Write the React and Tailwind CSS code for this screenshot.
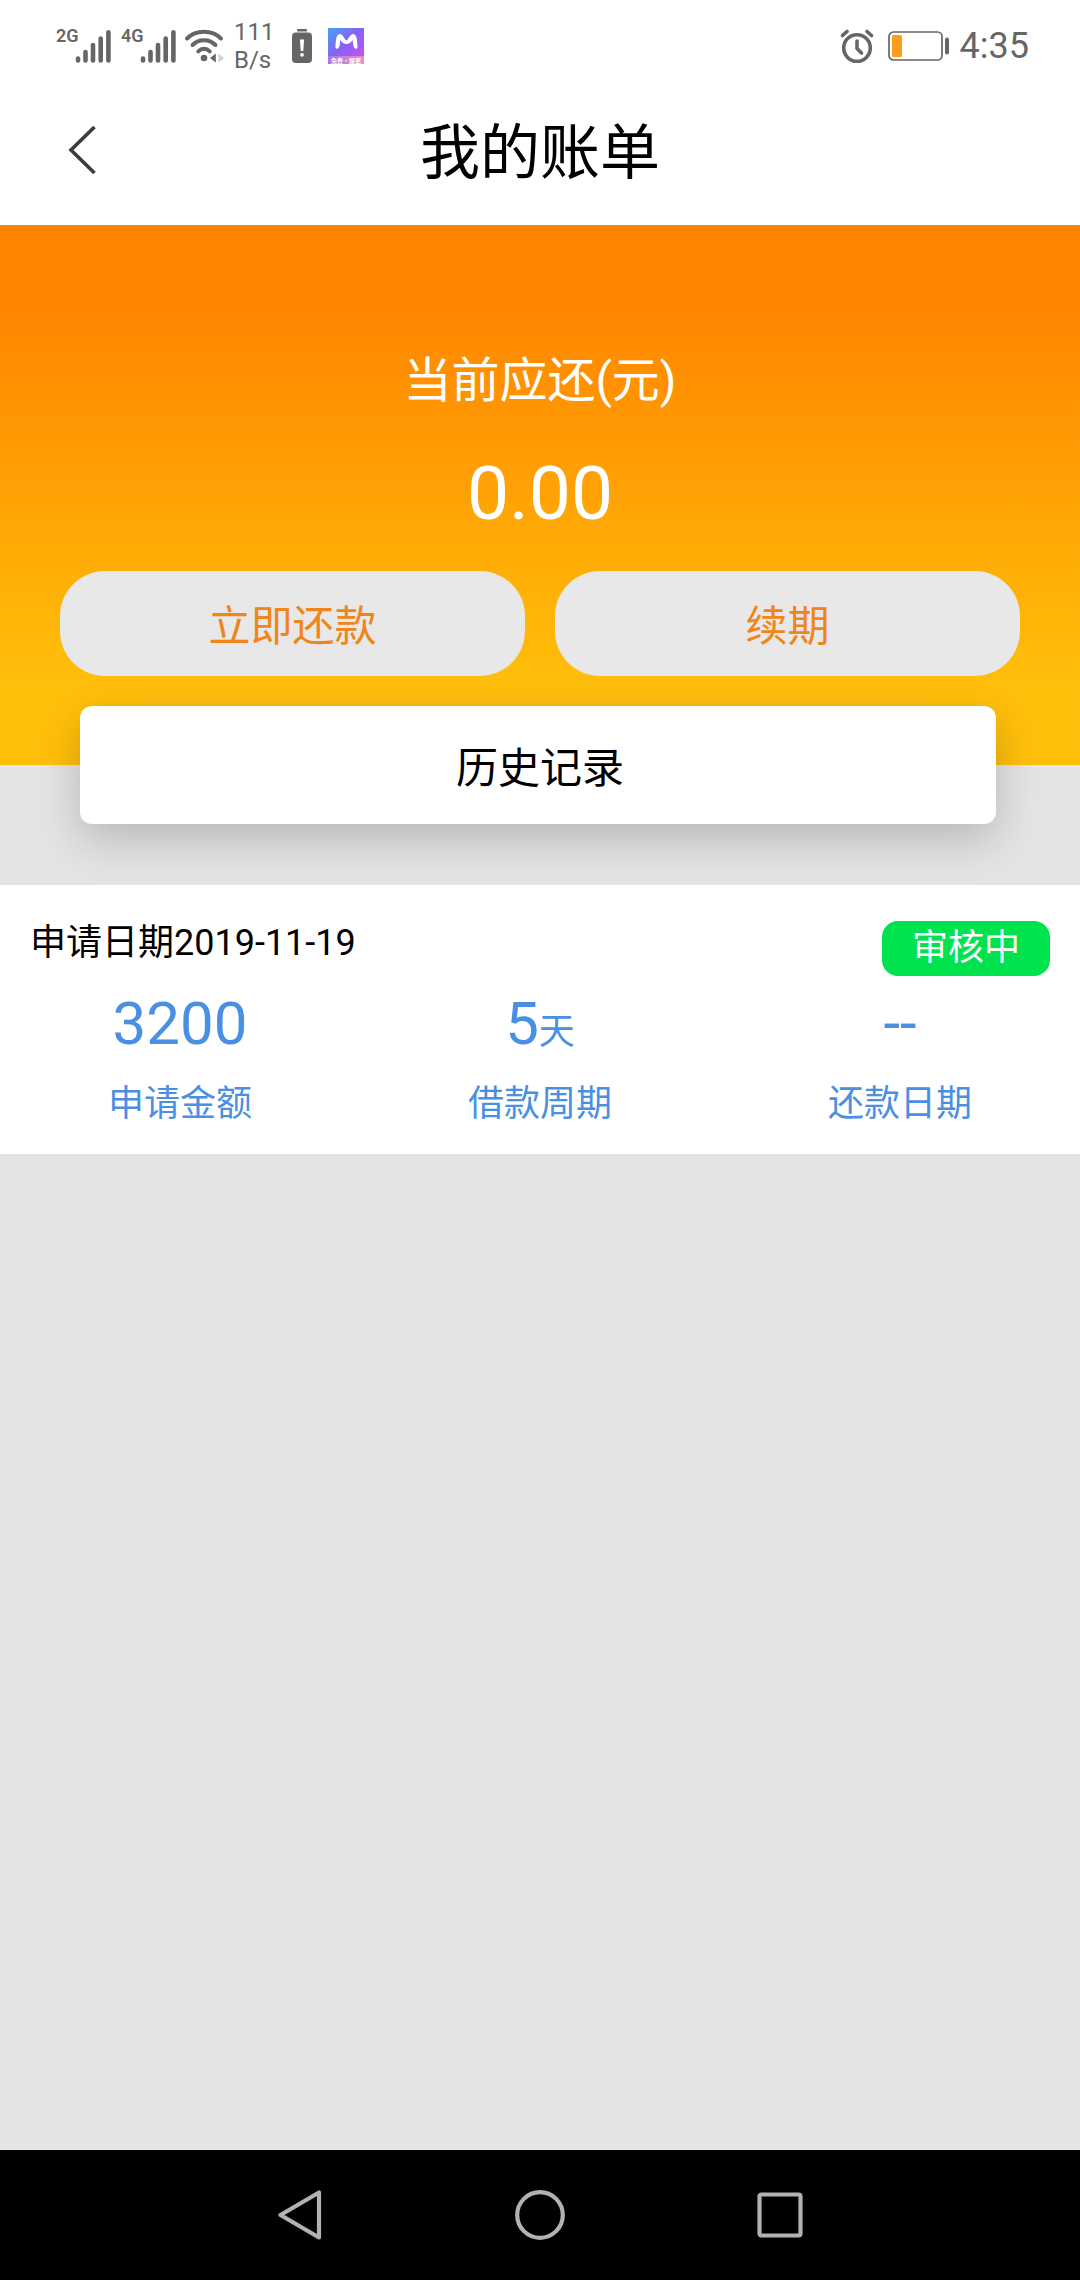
const stats = [
  { label: "申请金额", value: "3200" },
  { label: "借款周期", value: "5", unit: "天" },
  { label: "还款日期", value: "--" },
];

function Signal({ network }) {
  return (
    <div className="flex items-start">
      <span className="w-5 text-lg leading-4 font-semibold">{network}</span>
      <svg viewBox="0 0 36 36" className="mt-px -ml-px size-9" stroke="currentColor" strokeWidth="4.6" strokeLinecap="round">
        <path d="M3 29.5V31.5M10.5 23V31.5M18 16V31.5M25.7 9.5V31.5M33.4 3.3V31.5" />
      </svg>
    </div>
  );
}

function WifiIcon() {
  return (
    <svg viewBox="0 0 40 36" className="h-9 w-10" fill="none" stroke="currentColor" strokeWidth="4" strokeLinecap="round">
      <path d="M3 10.5C12 1.5 28 1.5 37 10.5M8.5 17C15 10.5 25 10.5 31.5 17M14.3 23.3C17.6 20 22.4 20 25.7 23.3" />
      <circle cx="20" cy="30" r="3.3" fill="currentColor" stroke="none" />
      <path d="M31.8 25.5V34.5L26 30Z" fill="currentColor" stroke="none" />
      <path d="M34.5 25.5V34.5L40 30Z" fill="#d0d0d0" stroke="none" />
    </svg>
  );
}

function BatteryAlertIcon() {
  return (
    <svg viewBox="0 0 20 36" className="h-9 w-5" fill="currentColor">
      <rect x="5" y="1" width="10" height="2.5" rx="1" />
      <rect x="0" y="4.5" width="20" height="30.5" rx="4" />
      <path d="M8 11.5H12L11.3 23H8.7Z" fill="#fff" />
      <circle cx="10" cy="26.8" r="1.9" fill="#fff" />
    </svg>
  );
}

function AppBadge() {
  return (
    <svg viewBox="0 0 36 36" className="size-9">
      <defs>
        <linearGradient id="badge" x1="0" y1="0" x2="1" y2="1">
          <stop offset="0" stopColor="#3fa4f0" />
          <stop offset="0.45" stopColor="#8862f4" />
          <stop offset="1" stopColor="#d050e8" />
        </linearGradient>
        <linearGradient id="badgeFoot" x1="0" y1="0" x2="1" y2="0">
          <stop offset="0" stopColor="#a878ee" />
          <stop offset="1" stopColor="#f08cbc" />
        </linearGradient>
      </defs>
      <rect width="36" height="36" fill="url(#badge)" />
      <rect y="28" width="36" height="8" fill="url(#badgeFoot)" />
      <path
        d="M7.5 20C7.5 12 8.5 6.5 11.5 6C14.5 5.6 16 10.5 18.5 12.5C21 10.5 22.5 5.6 25.5 6C28.5 6.5 29.5 12 29.5 20C28 21.5 26 20.5 25.5 18L24.5 12C23 14.5 21 16 18.5 16C16 16 14 14.5 12.5 12L11.5 18C11 20.5 9 21.5 7.5 20Z"
        fill="#fff"
      />
      <text x="18" y="34.5" textAnchor="middle" fontSize="6" fontWeight="700" fill="#fff" fontFamily="Noto Sans CJK SC">
        免费·爆更
      </text>
    </svg>
  );
}

function AlarmIcon() {
  return (
    <svg viewBox="0 0 34 36" className="h-9 w-[34px]" fill="none" stroke="currentColor" strokeWidth="3.6" strokeLinecap="round" strokeLinejoin="round">
      <circle cx="17" cy="20" r="13.3" />
      <path d="M17 13V20.5L21.5 25" />
      <path d="M2.5 7.5L7 3.5M31.5 7.5L27 3.5" />
    </svg>
  );
}

function BatteryIcon() {
  return (
    <svg viewBox="0 0 62 30" className="h-[30px] w-[62px]" fill="none">
      <rect x="1" y="1" width="53" height="28" rx="4.5" stroke="currentColor" strokeWidth="1.7" />
      <rect x="4" y="4" width="10" height="22" rx="1.5" fill="#ff9c1c" />
      <rect x="57" y="6.5" width="4" height="17" rx="2" fill="currentColor" />
    </svg>
  );
}

function StatusBar() {
  return (
    <div className="flex h-[90px] items-center justify-between pt-0.5 pr-[51px] pl-14 text-[#666]">
      <div className="flex items-center">
        <Signal network="2G" />
        <div className="ml-2.5">
          <Signal network="4G" />
        </div>
        <div className="ml-2">
          <WifiIcon />
        </div>
        <div className="ml-2.5 text-2xl leading-7">
          <div>111</div>
          <div>B/s</div>
        </div>
        <div className="ml-[18px]">
          <BatteryAlertIcon />
        </div>
        <div className="ml-4">
          <AppBadge />
        </div>
      </div>
      <div className="flex items-center">
        <AlarmIcon />
        <div className="ml-3.5">
          <BatteryIcon />
        </div>
        <span className="ml-2.5 text-4xl">4:35</span>
      </div>
    </div>
  );
}

function NavBar() {
  return (
    <nav className="flex h-[130px] items-center justify-center gap-[190px] bg-black text-[#b2b2b2]">
      <button type="button" aria-label="返回">
        <svg viewBox="0 0 50 50" className="size-[50px]" fill="none" stroke="currentColor" strokeWidth="4.2" strokeLinejoin="round">
          <path d="M44 2.5V47.5L5.5 25Z" />
        </svg>
      </button>
      <button type="button" aria-label="主屏幕">
        <svg viewBox="0 0 50 50" className="size-[50px]" fill="none" stroke="currentColor" strokeWidth="4.2">
          <circle cx="25" cy="25" r="22.8" />
        </svg>
      </button>
      <button type="button" aria-label="最近任务">
        <svg viewBox="0 0 50 50" className="size-[50px]" fill="none" stroke="currentColor" strokeWidth="4.2" strokeLinejoin="round">
          <rect x="4.5" y="4.5" width="41" height="41" rx="2" />
        </svg>
      </button>
    </nav>
  );
}

export default function App() {
  return (
    <div className="flex min-h-screen flex-col bg-[#e4e4e4] font-[Roboto,'Noto_Sans_CJK_SC',sans-serif] text-black">
      <header className="bg-white">
        <StatusBar />
        <div className="grid h-[135px] grid-cols-[1fr_auto_1fr] items-start px-[68px] pt-5">
          <button type="button" aria-label="返回" className="mt-4 justify-self-start">
            <svg viewBox="0 0 28 48" className="h-12 w-7" fill="none" stroke="#3c3c3c" strokeWidth="3.6">
              <path d="M26.5 1L3 24L26.5 47" />
            </svg>
          </button>
          <h1 className="text-6xl leading-[88px]">我的账单</h1>
        </div>
      </header>

      <main className="flex-1">
        <section className="flex flex-col bg-linear-to-b from-[#ff8500] from-15% to-[#ffbf0b] to-85% pt-[120px]">
          <div className="text-center text-white">
            <p className="text-5xl leading-[72px]">当前应还(元)</p>
            <p className="mt-8 text-[75px] leading-[88px]">0.00</p>
          </div>
          <div className="mt-[34px] flex gap-[30px] px-[60px] text-[42px] text-[#f08519]">
            <button type="button" className="h-[105px] flex-1 rounded-[45px] bg-[#e8e8e8] pt-1.5">立即还款</button>
            <button type="button" className="h-[105px] flex-1 rounded-[45px] bg-[#e8e8e8] pt-1.5">续期</button>
          </div>
          <button
            type="button"
            className="mt-[30px] mr-[84px] -mb-[59px] ml-20 h-[118px] rounded-xl bg-white pt-1.5 pl-1 text-[42px] shadow-[0_15px_45px_rgba(0,0,0,0.2)]"
          >
            历史记录
          </button>
        </section>

        <section className="mt-[120px] bg-white pt-9 pb-6">
          <div className="flex items-start justify-between px-[30px] text-4xl">
            <p className="leading-[44px]">申请日期2019-11-19</p>
            <span className="h-[55px] rounded-2xl bg-[#00e34f] px-[30px] leading-[55px] text-white">审核中</span>
          </div>
          <dl className="mt-3.5 grid grid-cols-3 text-center text-[#4a90e2]">
            {stats.map((stat) => (
              <div key={stat.label} className="flex flex-col-reverse">
                <dt className="text-4xl leading-[52px]">{stat.label}</dt>
                <dd className="mb-5 text-6xl leading-[68px]">
                  {stat.value}
                  {stat.unit && <span className="text-4xl">{stat.unit}</span>}
                </dd>
              </div>
            ))}
          </dl>
        </section>
      </main>

      <NavBar />
    </div>
  );
}
